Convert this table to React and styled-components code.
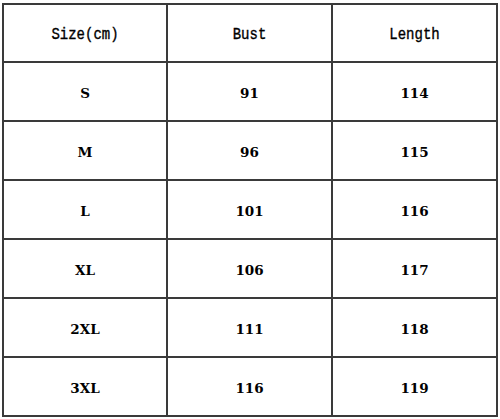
import styled, { createGlobalStyle } from "styled-components"

const rows = [
    ["S", "91", "114"],
    ["M", "96", "115"],
    ["L", "101", "116"],
    ["XL", "106", "117"],
    ["2XL", "111", "118"],
    ["3XL", "116", "119"],
]

export default function App() {
    return (
        <>
            <Global />
            <Page>
                <Grid>
                    <Head><span>Size(cm)</span></Head>
                    <Head><span>Bust</span></Head>
                    <Head><span>Length</span></Head>
                    {rows.map((r) =>
                        r.map((v, i) => <Cell key={r[0] + i}>{v}</Cell>)
                    )}
                </Grid>
            </Page>
        </>
    )
}

const Global = createGlobalStyle`
    body {
        margin: 0;
        background: #fff;
    }
`

const Page = styled.div`
    width: 500px;
    height: 419px;
    padding: 3px 0 0 2px;
    box-sizing: border-box;
`

const Grid = styled.div`
    display: grid;
    grid-template-columns: 164px 165px 165px;
    grid-template-rows: 58px repeat(6, 59px);
    border-left: 2px solid #3a3a3a;
    border-top: 2px solid #3a3a3a;
    width: max-content;
`

const Box = styled.div`
    display: flex;
    align-items: center;
    justify-content: center;
    border-right: 2px solid #3a3a3a;
    border-bottom: 2px solid #3a3a3a;
    color: #000;
    box-sizing: border-box;
`

const Head = styled(Box)`
    font-family: "Liberation Mono", monospace;
    font-size: 14px;
    padding-top: 2px;

    span {
        display: inline-block;
        transform: scaleY(1.15);
        -webkit-text-stroke: 0.3px #000;
    }
`

const Cell = styled(Box)`
    font-family: "DejaVu Serif", serif;
    font-weight: bold;
    font-size: 13.5px;
    padding-top: 3px;
`
